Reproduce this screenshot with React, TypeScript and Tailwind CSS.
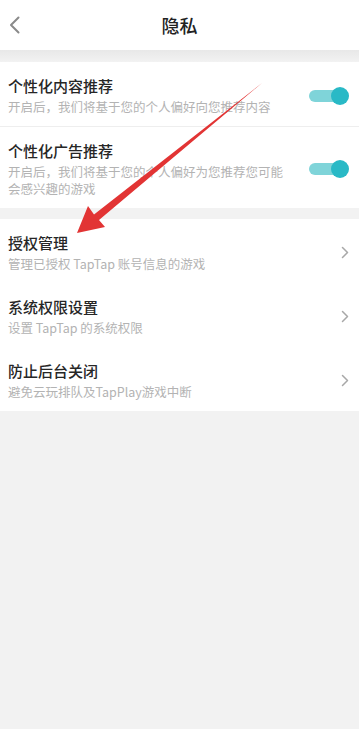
import React from "react";

const font = { fontFamily: '"Noto Sans CJK SC", "Noto Sans", sans-serif' };

function Toggle() {
  return (
    <div className="relative w-[40px] h-[18px] flex items-center shrink-0">
      <div className="w-[36px] h-[12px] rounded-full bg-[#7fd4d9]" />
      <div className="absolute right-0 w-[18px] h-[18px] rounded-full bg-[#29b9c6]" />
    </div>
  );
}

function Chevron() {
  return (
    <svg width="8" height="13" viewBox="0 0 8 13" className="shrink-0">
      <path d="M1.5 1.5 L6.5 6.5 L1.5 11.5" fill="none" stroke="#a8a8a8" strokeWidth="1.5" strokeLinecap="round" strokeLinejoin="round" />
    </svg>
  );
}

function Row({ title, sub, right, divider }: { title: string; sub: string; right: React.ReactNode; divider?: boolean }) {
  return (
    <div className={"flex items-center justify-between pl-[8px] pr-[10px] pt-[14px] pb-[11px] " + (divider ? "border-b border-[#eeeeee]" : "")}>
      <div className="w-[284px] flex flex-col gap-[2px]">
        <div className="text-[15px] leading-[20px] text-[#262626] font-medium">{title}</div>
        <div className="text-[12.5px] leading-[17px] text-[#b3b3b3]">{sub}</div>
      </div>
      {right}
    </div>
  );
}

export default function App() {
  return (
    <div className="relative min-h-[729px] bg-[#f2f2f2]" style={font}>
      {/* Header */}
      <div className="h-[50px] bg-white flex items-center relative">
        <svg width="12" height="18" viewBox="0 0 12 18" className="ml-[9px]">
          <path d="M9.5 1.5 L2 9 L9.5 16.5" fill="none" stroke="#8a8a8a" strokeWidth="2" strokeLinecap="round" strokeLinejoin="round" />
        </svg>
        <div className="absolute inset-0 flex items-center justify-center text-[18px] text-[#222] font-medium">隐私</div>
      </div>
      <div className="h-[12px] bg-gradient-to-b from-[#e8e8e8] to-[#f2f2f2]" />

      {/* Recommendations */}
      <div className="bg-white">
        <Row title="个性化内容推荐" sub="开启后，我们将基于您的个人偏好向您推荐内容" right={<Toggle />} divider />
        <Row title="个性化广告推荐" sub="开启后，我们将基于您的个人偏好为您推荐您可能会感兴趣的游戏" right={<Toggle />} />
      </div>
      <div className="h-[11px]" />

      {/* Permissions */}
      <div className="bg-white">
        <Row title="授权管理" sub="管理已授权 TapTap 账号信息的游戏" right={<Chevron />} />
        <Row title="系统权限设置" sub="设置 TapTap 的系统权限" right={<Chevron />} />
        <Row title="防止后台关闭" sub="避免云玩排队及TapPlay游戏中断" right={<Chevron />} />
      </div>

      {/* Annotation arrow */}
      <svg className="absolute left-0 top-0 pointer-events-none" width="359" height="729" viewBox="0 0 359 729">
        <polygon points="77,233 105,227 99,220 262,83 94,214.5 88,206" fill="#e23434" />
      </svg>
    </div>
  );
}
